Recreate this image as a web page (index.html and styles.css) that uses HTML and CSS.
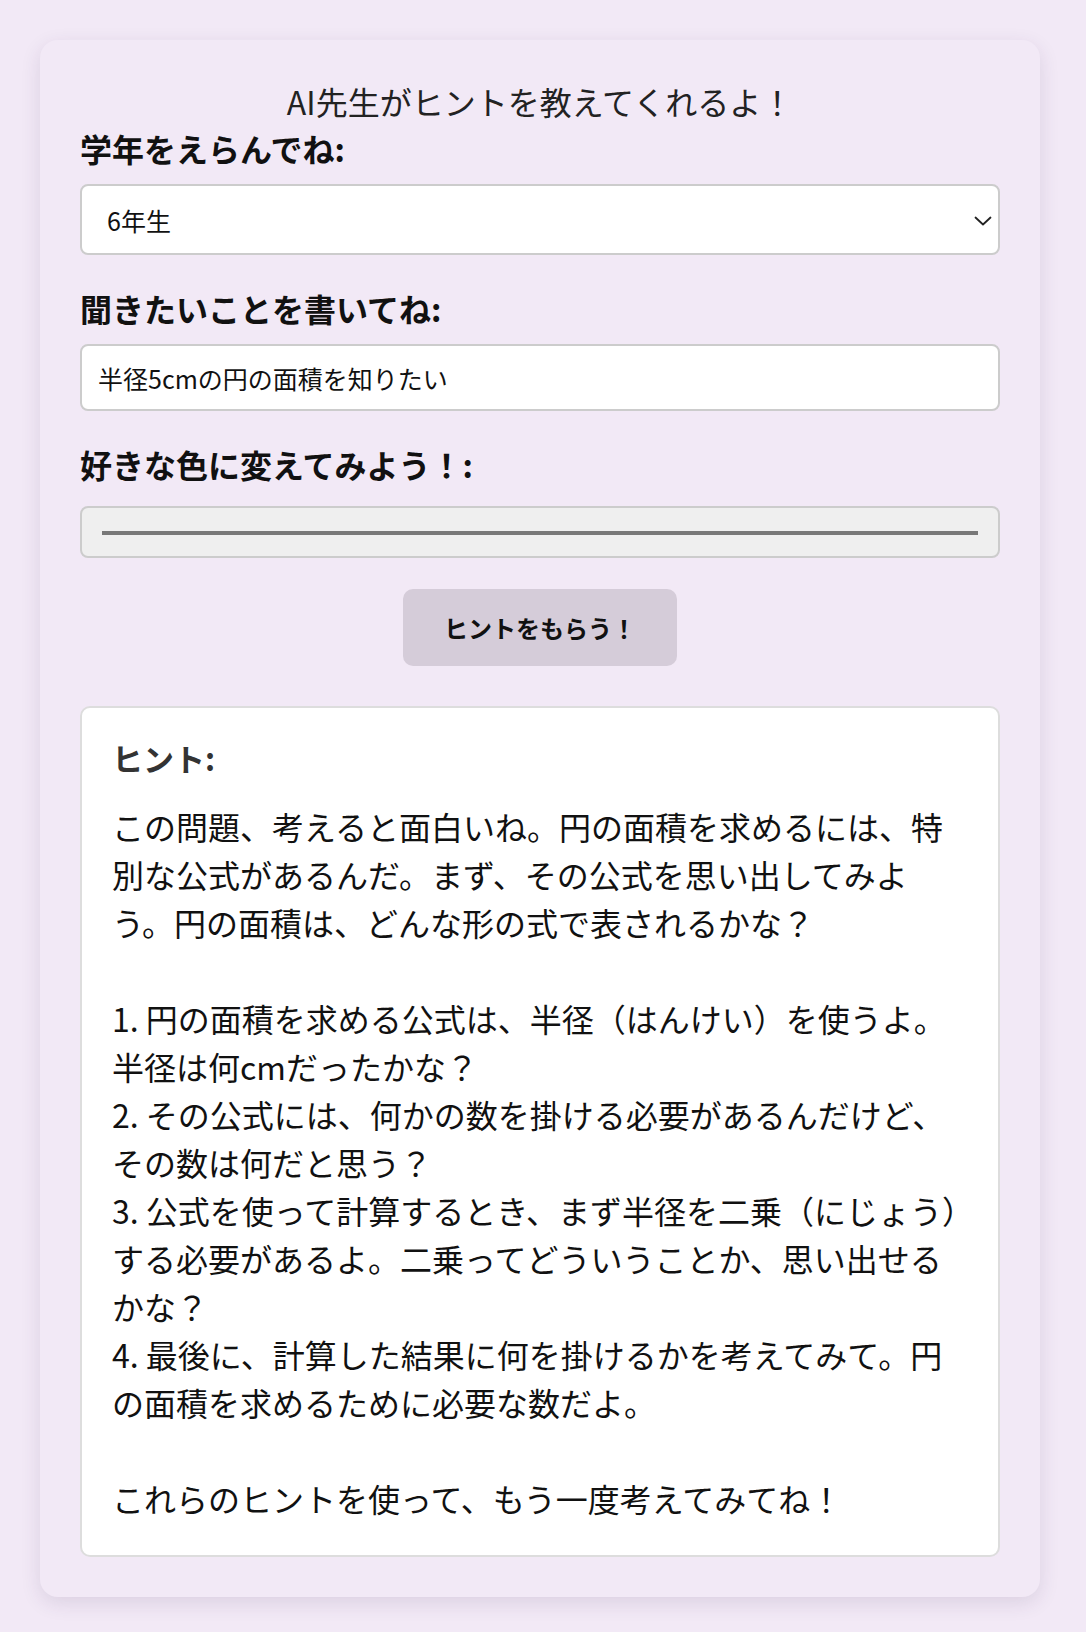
FILE: index.html
```html
<!DOCTYPE html>
<html lang="ja">
<head>
<meta charset="utf-8">
<title>AI先生のヒント</title>
<link rel="stylesheet" href="styles.css">
</head>
<body>
<div class="page">
  <main class="card">
    <p class="title">AI先生がヒントを教えてくれるよ！</p>

    <div class="group">
      <label class="label" for="grade">学年をえらんでね:</label>
      <div class="select-wrap">
        <select id="grade" class="select">
          <option>1年生</option>
          <option>2年生</option>
          <option>3年生</option>
          <option>4年生</option>
          <option>5年生</option>
          <option selected>6年生</option>
        </select>
        <svg class="chevron" width="18" height="10" viewBox="0 0 18 10" aria-hidden="true">
          <path d="M1.5 1.5 L9 8.5 L16.5 1.5" fill="none" stroke="#222" stroke-width="1.8" stroke-linecap="round" stroke-linejoin="round"/>
        </svg>
      </div>
    </div>

    <div class="group">
      <label class="label" for="question">聞きたいことを書いてね:</label>
      <input id="question" class="text-input" type="text" value="半径5cmの円の面積を知りたい">
    </div>

    <div class="group">
      <label class="label label--color" for="color">好きな色に変えてみよう！:</label>
      <input id="color" class="color-input" type="color" value="#787878">
    </div>

    <div class="actions">
      <button class="button" type="button">ヒントをもらう！</button>
    </div>

    <section class="hint">
      <h3 class="hint-title">ヒント:</h3>
      <p class="hint-text">この問題、考えると面白いね。円の面積を求めるには、特別な公式があるんだ。まず、その公式を思い出してみよう。円の面積は、どんな形の式で表されるかな？

1. 円の面積を求める公式は、半径（はんけい）を使うよ。半径は何cmだったかな？
2. その公式には、何かの数を掛ける必要があるんだけど、その数は何だと思う？
3. 公式を使って計算するとき、まず半径を二乗（にじょう）する必要があるよ。二乗ってどういうことか、思い出せるかな？
4. 最後に、計算した結果に何を掛けるかを考えてみて。円の面積を求めるために必要な数だよ。

これらのヒントを使って、もう一度考えてみてね！</p>
    </section>
  </main>
</div>
</body>
</html>
```

FILE: styles.css
```css
* {
  box-sizing: border-box;
}

html, body {
  margin: 0;
  padding: 0;
  background: #f2e9f6;
}

body {
  font-family: "Noto Sans CJK JP", "Noto Sans", sans-serif;
  color: #111;
}

.page {
  padding: 40px;
}

.card {
  max-width: 1000px;
  padding: 40px;
  background: #f2e9f6;
  border-radius: 18px;
  box-shadow: 0 6px 20px rgba(60, 30, 80, 0.12);
}

.title {
  margin: 0 0 4px;
  font-size: 32px;
  line-height: 42px;
  text-align: center;
  color: #222;
}

.group {
  margin-bottom: 31px;
}

.label {
  display: block;
  font-size: 32px;
  font-weight: 700;
  line-height: 45px;
  margin-bottom: 13px;
  color: #111;
}

.label--color {
  margin-bottom: 19px;
}

.select-wrap {
  position: relative;
}

.select {
  display: block;
  width: 100%;
  height: 71px;
  padding: 0 40px 0 25px;
  border: 2px solid #cccccc;
  border-radius: 8px;
  background: #ffffff;
  font-family: inherit;
  font-size: 25px;
  color: #111;
  -webkit-appearance: none;
  appearance: none;
  outline: none;
}

.chevron {
  position: absolute;
  right: 8px;
  top: 32px;
  pointer-events: none;
}

.text-input {
  display: block;
  width: 100%;
  height: 67px;
  padding: 0 16px;
  border: 2px solid #cccccc;
  border-radius: 8px;
  background: #ffffff;
  font-family: inherit;
  font-size: 25px;
  color: #111;
  outline: none;
}

.color-input {
  display: block;
  width: 100%;
  height: 52px;
  margin: 0;
  padding: 23px 20px 21px;
  border: 2px solid #cccccc;
  border-radius: 8px;
  background: #efefef;
  -webkit-appearance: none;
  appearance: none;
  cursor: pointer;
}

.color-input::-webkit-color-swatch-wrapper {
  padding: 0;
}

.color-input::-webkit-color-swatch {
  border: none;
  border-radius: 0;
}

.actions {
  display: flex;
  justify-content: center;
  margin-bottom: 40px;
}

.button {
  padding: 21px 41px;
  border: none;
  border-radius: 10px;
  background: #d5ccd9;
  font-family: inherit;
  font-size: 24px;
  font-weight: 700;
  line-height: 35px;
  color: #111;
  cursor: pointer;
}

.hint {
  padding: 27px 30px 33px;
  border: 2px solid #dddddd;
  border-radius: 10px;
  background: #ffffff;
}

.hint-title {
  margin: 0 0 22px;
  font-size: 31px;
  font-weight: 700;
  line-height: 45px;
  color: #333;
}

.hint-text {
  margin: 0;
  font-size: 32px;
  line-height: 48px;
  white-space: pre-wrap;
  color: #111;
}
```
